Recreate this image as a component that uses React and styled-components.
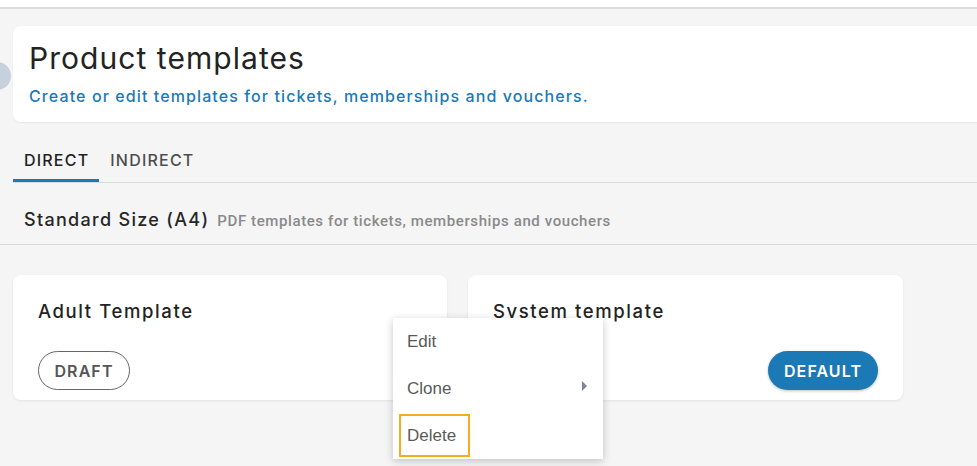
import React from "react";
import styled, { createGlobalStyle, css } from "styled-components";

const GlobalStyle = createGlobalStyle`
  html {
    overflow: hidden;
  }
  body {
    margin: 0;
    background: #f5f5f5;
  }
  * {
    box-sizing: border-box;
  }
`;

const BLUE = "#1b79b6";
const HEAD_FONT = `"Inter", "Noto Sans", sans-serif`;

const TopBar = styled.div`
  height: 9px;
  background: #fff;
  border-bottom: 2px solid #dcdcdc;
`;

const Page = styled.div`
  position: relative;
  padding-top: 17px;
  min-height: 460px;
`;

const HeaderCard = styled.header`
  position: relative;
  margin-left: 13px;
  margin-right: -20px;
  height: 96px;
  padding: 14px 16px;
  background: #fff;
  border-radius: 8px;
  box-shadow: 0 1px 2px rgba(0, 0, 0, 0.06);
`;

// sidebar toggle, mostly tucked off the left edge
const CollapseButton = styled.div`
  position: absolute;
  left: -30px;
  top: 36px;
  width: 28px;
  height: 28px;
  border-radius: 50%;
  background: #c7d1dd;

  &::after {
    content: "";
    position: absolute;
    right: 14px;
    top: 13px;
    width: 3px;
    height: 2px;
    background: #6d7888;
  }
`;

const Title = styled.h1`
  margin: 0;
  font-family: ${HEAD_FONT};
  font-weight: 400;
  font-size: 30px;
  line-height: 36px;
  color: #232323;
  letter-spacing: 1.05px;
`;

const Subtitle = styled.p`
  margin: 10px 0 0;
  font-family: ${HEAD_FONT};
  font-size: 16px;
  font-weight: 500;
  color: ${BLUE};
  letter-spacing: 1.1px;
`;

const Tabs = styled.nav`
  display: flex;
  margin: 19px 0 0 13px;
  height: 42px;
  border-bottom: 1px solid #dadada;
`;

const Tab = styled.div`
  display: flex;
  align-items: center;
  padding: 0 10px 4px 11px;
  font-family: ${HEAD_FONT};
  font-size: 16px;
  font-weight: 500;
  letter-spacing: 1.2px;
  color: ${(p) => (p.active ? "#1f1f1f" : "#4d4d4d")};
  ${(p) =>
    p.active &&
    css`
      box-shadow: inset 0 -3px 0 ${BLUE};
    `}
`;

const Section = styled.div`
  display: flex;
  align-items: baseline;
  gap: 8px;
  height: 62px;
  padding: 26px 0 0 24px;
  border-bottom: 1px solid #dadada;
`;

const SectionTitle = styled.span`
  font-family: ${HEAD_FONT};
  font-size: 18px;
  font-weight: 500;
  letter-spacing: 1.3px;
  color: #262626;
`;

const SectionHint = styled.span`
  font-family: Roboto, "Liberation Sans", sans-serif;
  font-size: 15px;
  font-weight: 500;
  letter-spacing: 0.6px;
  color: #8a8a8a;
`;

const CardGrid = styled.div`
  position: relative;
  display: grid;
  grid-template-columns: 434px 435px;
  gap: 21px;
  margin: 30px 0 0 13px;
`;

const Card = styled.div`
  display: flex;
  flex-direction: column;
  justify-content: space-between;
  height: 125px;
  padding: 25px 25px 10px 25px;
  background: #fff;
  border-radius: 8px;
  box-shadow: 0 1px 3px rgba(0, 0, 0, 0.08);
`;

const CardTitle = styled.h3`
  margin: 0;
  font-family: ${HEAD_FONT};
  font-size: 18.5px;
  font-weight: 500;
  letter-spacing: 1.6px;
  color: #232323;
`;

const PillRow = styled.div`
  display: flex;
  justify-content: ${(p) => (p.end ? "flex-end" : "flex-start")};
`;

const Pill = styled.span`
  display: inline-flex;
  align-items: center;
  justify-content: center;
  height: 39px;
  padding: 0 14px;
  border-radius: 20px;
  font-family: ${HEAD_FONT};
  font-size: 16px;
  font-weight: 600;
  letter-spacing: 1.1px;
  ${(p) =>
    p.primary
      ? css`
          min-width: 110px;
          background: ${BLUE};
          color: #fff;
          box-shadow: 0 1px 3px rgba(0, 0, 0, 0.25);
        `
      : css`
          min-width: 92px;
          background: #fff;
          color: #555;
          border: 1px solid #666;
        `}
`;

const Menu = styled.ul`
  position: absolute;
  left: 380px;
  top: 43px;
  width: 210px;
  margin: 0;
  padding: 0;
  list-style: none;
  background: #fff;
  box-shadow: 0 2px 8px rgba(0, 0, 0, 0.22);
`;

const MenuItem = styled.li`
  position: relative;
  display: flex;
  align-items: center;
  height: 47px;
  padding-left: 14px;
  font-family: "Liberation Sans", Arial, sans-serif;
  font-size: 17px;
  color: #5a5a5a;
`;

const MenuLabel = styled.span`
  ${(p) =>
    p.focused &&
    css`
      margin-left: -7px;
      padding: 11px 13px 10px 7px;
      outline: 2px solid #f6ac1f;
      outline-offset: -1px;
    `}
`;

const SubArrow = styled.span`
  position: absolute;
  right: 16px;
  top: 50%;
  transform: translateY(-50%);
  width: 0;
  height: 0;
  border-top: 5px solid transparent;
  border-bottom: 5px solid transparent;
  border-left: 5px solid #7c8594;
  margin-top: -3px;
`;

export default function App() {
  return (
    <>
      <GlobalStyle />
      <TopBar />
      <Page>
        <HeaderCard>
          <CollapseButton />
          <Title>Product templates</Title>
          <Subtitle>Create or edit templates for tickets, memberships and vouchers.</Subtitle>
        </HeaderCard>

        <Tabs>
          <Tab active>DIRECT</Tab>
          <Tab>INDIRECT</Tab>
        </Tabs>

        <Section>
          <SectionTitle>Standard Size (A4)</SectionTitle>
          <SectionHint>PDF templates for tickets, memberships and vouchers</SectionHint>
        </Section>

        <CardGrid>
          <Card>
            <CardTitle>Adult Template</CardTitle>
            <PillRow>
              <Pill>DRAFT</Pill>
            </PillRow>
          </Card>
          <Card>
            <CardTitle>System template</CardTitle>
            <PillRow end>
              <Pill primary>DEFAULT</Pill>
            </PillRow>
          </Card>

          <Menu>
            <MenuItem>Edit</MenuItem>
            <MenuItem>
              Clone
              <SubArrow />
            </MenuItem>
            <MenuItem>
              <MenuLabel focused>Delete</MenuLabel>
            </MenuItem>
          </Menu>
        </CardGrid>
      </Page>
    </>
  );
}
